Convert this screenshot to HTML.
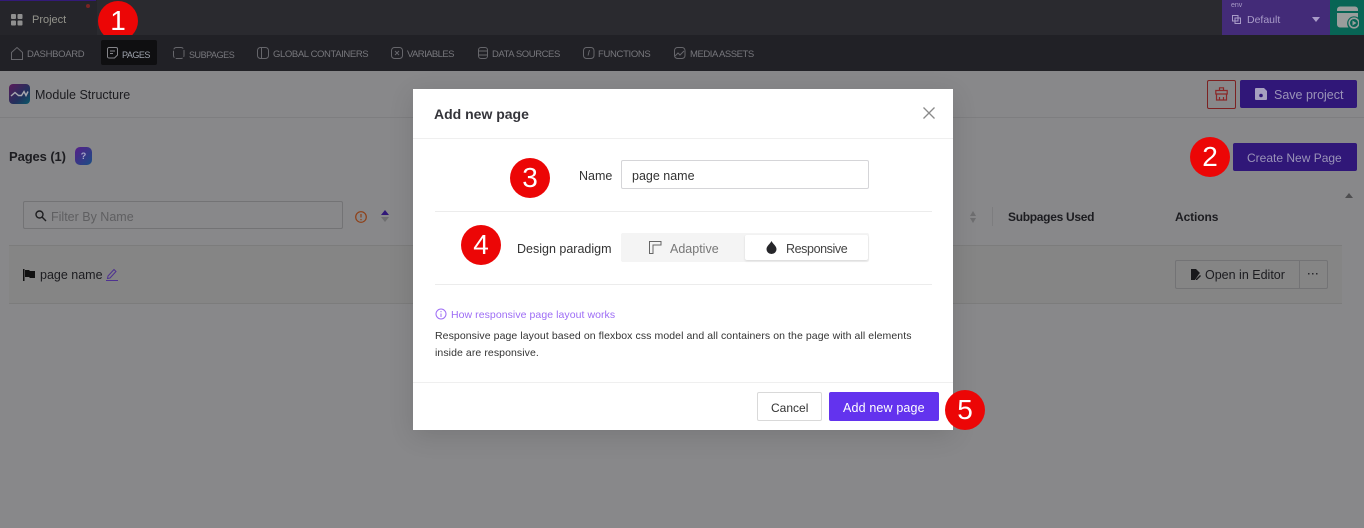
<!DOCTYPE html>
<html lang="en"><head><meta charset="utf-8"><title>Add new page</title>
<style>
html,body{margin:0;padding:0;width:1364px;height:528px;overflow:hidden;background:#88888a}
body{position:relative;font-family:"Liberation Sans",sans-serif}
.a{position:absolute}
.t{position:absolute;white-space:nowrap;line-height:16px}
.n{font-size:9.500px;color:#77777c;top:47px}
.c{position:absolute;width:40px;height:40px;border-radius:50%;background:#ec0606;color:#fff;font-size:28px;line-height:40px;text-align:center}
svg{position:absolute;display:block}
</style></head><body>
<!-- top bar -->
<div class="a" style="left:0;top:0;width:1364px;height:35px;background:#2a2a2f"></div>
<div class="a" style="left:0;top:0;width:97px;height:35px;background:#25252a"></div>
<div class="a" style="left:0;top:0;width:96px;height:1px;background:#331a78"></div>
<div class="a" style="left:86px;top:4px;width:4px;height:4px;border-radius:50%;background:#7a2424"></div>
<svg style="left:11px;top:14px" width="12" height="12"><rect width="5" height="5" rx="1" fill="#8f8f8f"/><rect x="6.500" width="5" height="5" rx="1" fill="#8f8f8f"/><rect y="6.500" width="5" height="5" rx="1" fill="#8f8f8f"/><rect x="6.500" y="6.500" width="5" height="5" rx="1" fill="#8f8f8f"/></svg>
<div class="t" style="left:32px;top:12px;font-size:11px;color:#94948c">Project</div>
<div class="c" style="left:98px;top:1px">1</div>
<div class="a" style="left:1222px;top:0;width:108px;height:35px;background:#432b78"></div>
<div class="t" style="left:1231px;top:-2px;font-size:7px;color:#a99cc8">env</div>
<svg style="left:1232px;top:15px" width="9" height="9" fill="none" stroke="#a99cc8"><rect x=".5" y=".5" width="5.500" height="5.500"/><rect x="3" y="3" width="5.500" height="5.500"/></svg>
<div class="t" style="left:1247px;top:12px;font-size:10.500px;color:#a99cc8">Default</div>
<div class="a" style="left:1312px;top:17px;width:0;height:0;border-left:4px solid transparent;border-right:4px solid transparent;border-top:5px solid #a99cc8"></div>
<div class="a" style="left:1330px;top:0;width:34px;height:35px;background:#086555"></div>
<svg style="left:1337px;top:6px" width="22" height="23"><path d="M3 .5h15a3 3 0 0 1 3 3V5H0V3.500a3 3 0 0 1 3-3zM0 7h21v4.500a7 7 0 0 0-9.500 10H3a3 3 0 0 1-3-3z" fill="#9a9d9c"/><circle cx="17" cy="17" r="4.800" fill="none" stroke="#9a9d9c" stroke-width="1.600"/><path d="M15.500 14.500l4 2.500-4 2.500z" fill="#9a9d9c"/></svg>
<!-- nav -->
<div class="a" style="left:0;top:35px;width:1364px;height:36px;background:#212126"></div>
<div class="a" style="left:101px;top:40px;width:56px;height:25px;border-radius:2px;background:#0f0f11"></div>
<svg style="left:11px;top:47px" width="12" height="13" fill="none" stroke="#66666b"><path d="M.5 5.500l5.500-5 5.500 5v7H.5z"/></svg>
<div class="t n" style="left:27px;letter-spacing:-.32px">DASHBOARD</div>
<svg style="left:107px;top:47px" width="11" height="12" fill="none" stroke="#85858a"><path d="M2 .5h7a1.500 1.500 0 0 1 1.500 1.500v6l-3 3H2A1.500 1.500 0 0 1 .5 10V2A1.500 1.500 0 0 1 2 .5zM3 4h5M3 6.500h3"/></svg>
<div class="t" style="left:122px;top:47px;font-size:9px;letter-spacing:-.5px;color:#9ea3ad">PAGES</div>
<svg style="left:173px;top:47px" width="12" height="12" fill="none" stroke="#66666b" stroke-dasharray="7 1.500"><rect x=".5" y=".5" width="10.500" height="11" rx="3"/></svg>
<div class="t n" style="left:189px;font-size:9px;letter-spacing:-.45px">SUBPAGES</div>
<svg style="left:257px;top:47px" width="12" height="12" fill="none" stroke="#66666b"><rect x=".5" y=".5" width="11" height="11" rx="3"/><path d="M4.500 .5v11"/></svg>
<div class="t n" style="left:273px;letter-spacing:-.39px">GLOBAL CONTAINERS</div>
<svg style="left:391px;top:47px" width="12" height="12" fill="none" stroke="#66666b"><rect x=".5" y=".5" width="11" height="11" rx="3"/><path d="M4 4l4 4M8 4l-4 4"/></svg>
<div class="t n" style="left:407px;letter-spacing:-.58px">VARIABLES</div>
<svg style="left:478px;top:47px" width="10" height="12" fill="none" stroke="#66666b"><rect x=".5" y=".5" width="9" height="11" rx="2.500"/><path d="M.5 4h9M.5 8h9"/></svg>
<div class="t n" style="left:492px;letter-spacing:-.43px">DATA SOURCES</div>
<svg style="left:583px;top:47px" width="12" height="12" fill="none" stroke="#66666b"><rect x=".5" y=".5" width="10.500" height="11" rx="3"/><path d="M7 3.500C5.500 3.500 6 6 5 8.500"/></svg>
<div class="t n" style="left:598px;letter-spacing:-.33px">FUNCTIONS</div>
<svg style="left:674px;top:47px" width="12" height="12" fill="none" stroke="#66666b"><rect x=".5" y=".5" width="10.500" height="11" rx="3"/><path d="M1 9l3-3 2 2 4-4"/></svg>
<div class="t n" style="left:690px;letter-spacing:-.45px">MEDIA ASSETS</div>
<!-- content -->
<div class="a" style="left:0;top:71px;width:1364px;height:457px;background:#88888a"></div>
<div class="a" style="left:0;top:117px;width:1364px;height:1px;background:#7e7e80"></div>
<div class="a" style="left:9px;top:84px;width:21px;height:20px;border-radius:4px;background:linear-gradient(135deg,#5a1a5a,#22305c 60%,#0a5868)"></div>
<svg style="left:10px;top:90px" width="19" height="9" fill="none" stroke="#a8a8b0" stroke-width="1.400"><path d="M1 6l4-3.500 3.500 3h3l2.500-4 2 4 2-4"/></svg>
<div class="t" style="left:35px;top:87px;font-size:12.500px;color:#1c1c20">Module Structure</div>
<div class="a" style="left:1207px;top:80px;width:27px;height:27px;border:1px solid #7c2222;border-radius:2px"></div>
<svg style="left:1215px;top:87px" width="13" height="14" fill="none" stroke="#8a2828" stroke-width="1.200"><path d="M4.500 3.500V.8h4v2.700M.8 3.500h11.400v3.500H.8zM1.500 7v6h10V7M4.500 10v3M8.500 10v3"/></svg>
<div class="a" style="left:1240px;top:80px;width:117px;height:28px;border-radius:2px;background:#301778"></div>
<svg style="left:1255px;top:88px" width="12" height="12"><path d="M1 0h8l3 3v8a1 1 0 0 1-1 1H1a1 1 0 0 1-1-1V1a1 1 0 0 1 1-1z" fill="#a6a0bf"/><circle cx="6" cy="7.500" r="1.800" fill="#301778"/></svg>
<div class="t" style="left:1274px;top:87px;font-size:12.500px;color:#9a93b8">Save project</div>
<div class="t" style="left:9px;top:149px;font-size:13px;font-weight:bold;color:#1c1c20;letter-spacing:-.1px">Pages (1)</div>
<div class="a" style="left:75px;top:147px;width:17px;height:18px;border-radius:5px;background:linear-gradient(135deg,#561e88,#1a4e84);font:bold 9px/18px 'Liberation Sans',sans-serif;text-align:center"><span style="color:#a8a8c8">?</span></div>
<div class="a" style="left:1233px;top:143px;width:124px;height:28px;border-radius:2px;background:#301778"></div>
<div class="t" style="left:1247px;top:150px;font-size:12px;color:#9a93b8">Create New Page</div>
<div class="c" style="left:1190px;top:137px">2</div>
<div class="a" style="left:23px;top:201px;width:318px;height:26px;border:1px solid #737375;border-radius:2px"></div>
<svg style="left:35px;top:210px" width="12" height="12" fill="none" stroke="#1e1e20" stroke-width="1.400"><circle cx="4.500" cy="4.500" r="3.500"/><path d="M7 7l4 4"/></svg>
<div class="t" style="left:51px;top:209px;font-size:12.500px;color:#5f5f61">Filter By Name</div>
<svg style="left:355px;top:211px" width="12" height="12" fill="none" stroke="#8f3f16" stroke-width="1.200"><circle cx="6" cy="6" r="5.300"/><path d="M6 3v3.500M6 8v1.200"/></svg>
<div class="a" style="left:381px;top:210px;width:0;height:0;border-left:4px solid transparent;border-right:4px solid transparent;border-bottom:5px solid #301778"></div>
<div class="a" style="left:381px;top:217px;width:0;height:0;border-left:4px solid transparent;border-right:4px solid transparent;border-top:5px solid #6e6e70"></div>
<div class="a" style="left:970px;top:211px;width:0;height:0;border-left:3.500px solid transparent;border-right:3.500px solid transparent;border-bottom:5px solid #6e6e70"></div>
<div class="a" style="left:970px;top:218px;width:0;height:0;border-left:3.500px solid transparent;border-right:3.500px solid transparent;border-top:5px solid #6e6e70"></div>
<div class="a" style="left:992px;top:207px;width:1px;height:19px;background:#7d7d7f"></div>
<div class="t" style="left:1008px;top:209px;font-size:12px;font-weight:bold;color:#1c1c20;letter-spacing:-.3px">Subpages Used</div>
<div class="t" style="left:1175px;top:209px;font-size:12px;font-weight:bold;color:#1c1c20;letter-spacing:-.1px">Actions</div>
<div class="a" style="left:9px;top:245px;width:1333px;height:59px;background:#858585;border-top:1px solid #7c7c7c;border-bottom:1px solid #7c7c7c;box-sizing:border-box"></div>
<svg style="left:23px;top:269px" width="13" height="12" fill="#111"><path d="M0 0h1.500v12H0zM2 1h4l1 1h5v7H7L6 8H2z"/></svg>
<div class="t" style="left:40px;top:267px;font-size:12.500px;color:#1c1c20">page name</div>
<svg style="left:106px;top:268px" width="12" height="13" fill="none" stroke="#4e3290"><path d="M2 8l6-6.500 2 2-6 6.500-2.500.5zM0 12.500h12"/></svg>
<div class="a" style="left:1175px;top:260px;width:151px;height:27px;border:1px solid #737375;border-radius:2px"></div>
<div class="a" style="left:1299px;top:260px;width:1px;height:29px;background:#737375"></div>
<svg style="left:1191px;top:269px" width="10" height="11" fill="#17171a"><path d="M0 0h5l4 4-1 1-4 6H0z"/><path d="M9 6l1 1-4 4H5v-1z"/></svg>
<div class="t" style="left:1205px;top:267px;font-size:12.500px;color:#1c1c20">Open in Editor</div>
<svg style="left:1308px;top:273px" width="10" height="2" fill="#2a2a2e"><rect width="1.500" height="1.500"/><rect x="4" width="1.500" height="1.500"/><rect x="8" width="1.500" height="1.500"/></svg>
<div class="a" style="left:1345px;top:193px;width:0;height:0;border-left:4.500px solid transparent;border-right:4.500px solid transparent;border-bottom:5px solid #4e4e50"></div>
<!-- modal -->
<div class="a" style="left:413px;top:89px;width:540px;height:341px;background:#fff;box-shadow:0 6px 24px rgba(0,0,0,.12)"></div>
<div class="t" style="left:434px;top:106px;font-size:14px;font-weight:bold;color:#34343a">Add new page</div>
<svg style="left:923px;top:107px" width="12" height="12" fill="none" stroke="#8a8a8a" stroke-width="1.300"><path d="M.5 .5l11 11M11.500 .5l-11 11"/></svg>
<div class="a" style="left:413px;top:138px;width:540px;height:1px;background:#efefef"></div>
<div class="c" style="left:510px;top:158px">3</div>
<div class="t" style="left:579px;top:168px;font-size:12.500px;color:#333">Name</div>
<div class="a" style="left:621px;top:160px;width:246px;height:27px;border:1px solid #d5d5d8;border-radius:2px"></div>
<div class="t" style="left:632px;top:168px;font-size:12.500px;color:#333">page name</div>
<div class="a" style="left:435px;top:211px;width:497px;height:1px;background:#ececec"></div>
<div class="c" style="left:461px;top:225px">4</div>
<div class="t" style="left:517px;top:241px;font-size:12.500px;color:#333">Design paradigm</div>
<div class="a" style="left:621px;top:233px;width:248px;height:29px;border-radius:2px;background:#f4f4f4"></div>
<div class="a" style="left:745px;top:235px;width:123px;height:25px;border-radius:2px;background:#fff;box-shadow:0 1px 2px rgba(0,0,0,.12)"></div>
<svg style="left:649px;top:241px" width="13" height="13" fill="none" stroke="#666"><path d="M.5 12.500V.5h11.500v3.500H4v8.500z"/></svg>
<div class="t" style="left:670px;top:241px;font-size:12.500px;color:#777">Adaptive</div>
<svg style="left:766px;top:241px" width="11" height="13"><path d="M5.500 0C7 3 10.500 5 10.500 8.200A5 4.800 0 0 1 .5 8.200C.5 5 4 3 5.500 0z" fill="#26262a"/></svg>
<div class="t" style="left:786px;top:241px;font-size:12.500px;color:#444;letter-spacing:-.4px">Responsive</div>
<div class="a" style="left:435px;top:284px;width:497px;height:1px;background:#ececec"></div>
<svg style="left:435px;top:308px" width="12" height="12" fill="none" stroke="#9d6cf5"><circle cx="6" cy="6" r="5"/><path d="M6 5.500v3.500M6 3v1.200"/></svg>
<div class="t" style="left:451px;top:307px;font-size:10.500px;letter-spacing:.06px;color:#9d6cf5">How responsive page layout works</div>
<div class="t" style="left:435px;top:328px;font-size:10.500px;letter-spacing:.08px;color:#333">Responsive page layout based on flexbox css model and all containers on the page with all elements</div>
<div class="t" style="left:435px;top:345px;font-size:10.500px;letter-spacing:.08px;color:#333">inside are responsive.</div>
<div class="a" style="left:413px;top:382px;width:540px;height:1px;background:#efefef"></div>
<div class="a" style="left:757px;top:392px;width:63px;height:27px;border:1px solid #d9d9d9;border-radius:2px;background:#fff"></div>
<div class="t" style="left:771px;top:400px;font-size:12px;color:#333">Cancel</div>
<div class="a" style="left:829px;top:392px;width:110px;height:29px;border-radius:2px;background:#6333ee"></div>
<div class="t" style="left:843px;top:400px;font-size:12.500px;letter-spacing:.15px;color:#fff">Add new page</div>
<div class="c" style="left:945px;top:390px">5</div>
</body></html>
